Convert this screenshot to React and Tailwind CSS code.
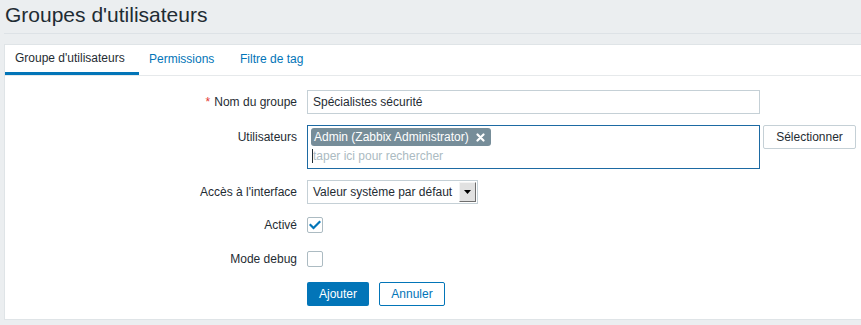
import React from "react";

function Label({ children, required }) {
  return (
    <div className="w-[292px] h-[24px] flex items-center justify-end shrink-0 text-[12px] text-[#1f2c33]">
      {required && <span className="text-[#e33734] mr-[4px]">*</span>}
      {children}
    </div>
  );
}

function Checkbox({ checked }) {
  return (
    <div className="w-[16px] h-[16px] border border-[#acbbc2] rounded-[2px] bg-white flex items-center justify-center">
      {checked && (
        <svg width="12" height="10" viewBox="0 0 12 10">
          <path d="M1.5 5 L4.5 8 L10.5 2" fill="none" stroke="#0275b8" strokeWidth="2.2" strokeLinecap="square" />
        </svg>
      )}
    </div>
  );
}

export default function App() {
  return (
    <div
      className="w-[861px] h-[325px] bg-[#ebeef0] overflow-hidden text-[#1f2c33]"
      style={{ fontFamily: '"Liberation Sans", Arial, sans-serif' }}
    >
      <div className="ml-[4px] h-[34px] border-b border-[#dde2e6]">
        <h1 className="pl-[1px] pt-[3px] text-[21px] leading-[24px] text-[#1f2c33]">Groupes d'utilisateurs</h1>
      </div>
      <div className="mt-[10px] ml-[4px] h-[276px] bg-white border border-[#dfe4e7] border-r-0 flex flex-col">
        <div className="h-[31px] border-b border-[#e6e9eb] flex text-[12px]">
          <div className="w-[134px] h-[30px] pl-[10px] pb-[2px] flex items-center border-b-[3px] border-[#0275b8] box-border text-[#1f2c33]">
            Groupe d'utilisateurs
          </div>
          <div className="w-[91px] h-[30px] pl-[10px] pb-[2px] flex items-center text-[#0275b8]">Permissions</div>
          <div className="h-[30px] pl-[10px] pb-[2px] flex items-center text-[#0275b8]">Filtre de tag</div>
        </div>

        <div className="flex flex-col pt-[14px]">
          <div className="flex gap-[10px] items-start">
            <Label required>Nom du groupe</Label>
            <div className="w-[453px] h-[24px] border border-[#c5d0d6] px-[5px] flex items-center text-[12px] text-[#1f2c33]">
              Spécialistes sécurité
            </div>
          </div>

          <div className="flex gap-[10px] items-start mt-[11px]">
            <Label>Utilisateurs</Label>
            <div className="w-[453px] h-[44px] border border-[#1d6aa3] pl-[3px] pt-[2px] flex flex-col">
              <div className="flex">
                <div className="h-[18px] bg-[#768d99] rounded-[3px] text-white text-[12px] flex items-center pl-[3px] pr-[6px]">
                  Admin (Zabbix Administrator)
                  <svg className="ml-[7px]" width="9" height="9" viewBox="0 0 9 9">
                    <path d="M1.5 1.5 L7.5 7.5 M7.5 1.5 L1.5 7.5" stroke="white" strokeWidth="2.2" strokeLinecap="round" />
                  </svg>
                </div>
              </div>
              <div className="h-[20px] flex items-center text-[12px] text-[#acbbc2] pl-[1px]">
                <span className="w-[1px] h-[14px] bg-[#1f2c33] mr-[0px]"></span>
                taper ici pour rechercher
              </div>
            </div>
            <div className="-ml-[7px] w-[93px] h-[24px] border border-[#c5d0d6] rounded-[2px] bg-white flex items-center justify-center text-[12px] text-[#1f2c33]">
              Sélectionner
            </div>
          </div>

          <div className="flex gap-[10px] items-start mt-[11px]">
            <Label>Accès à l'interface</Label>
            <div className="w-[171px] h-[24px] border border-[#c5d0d6] flex items-center text-[12px] text-[#1f2c33]">
              <span className="pl-[5px] flex-1 whitespace-nowrap overflow-hidden">Valeur système par défaut</span>
              <div className="w-[17px] h-[20px] mr-[1px] bg-[#e1e1e1] border border-t-[#f4f4f4] border-l-[#f4f4f4] border-r-[#6e6e6e] border-b-[#6e6e6e] flex items-center justify-center">
                <svg width="7" height="4" viewBox="0 0 7 4">
                  <path d="M0 0 L7 0 L3.5 4 Z" fill="#000" />
                </svg>
              </div>
            </div>
          </div>

          <div className="flex gap-[10px] items-center mt-[9px] h-[24px]">
            <Label>Activé</Label>
            <Checkbox checked />
          </div>

          <div className="flex gap-[10px] items-center mt-[10px] h-[24px]">
            <Label>Mode debug</Label>
            <Checkbox />
          </div>

          <div className="flex gap-[10px] items-center mt-[11px]">
            <div className="w-[292px] shrink-0"></div>
            <div className="w-[62px] h-[24px] bg-[#0275b8] rounded-[2px] text-white text-[12px] flex items-center justify-center">
              Ajouter
            </div>
            <div className="w-[66px] h-[24px] border border-[#0275b8] rounded-[2px] bg-white text-[#0275b8] text-[12px] flex items-center justify-center">
              Annuler
            </div>
          </div>
        </div>
      </div>
    </div>
  );
}
